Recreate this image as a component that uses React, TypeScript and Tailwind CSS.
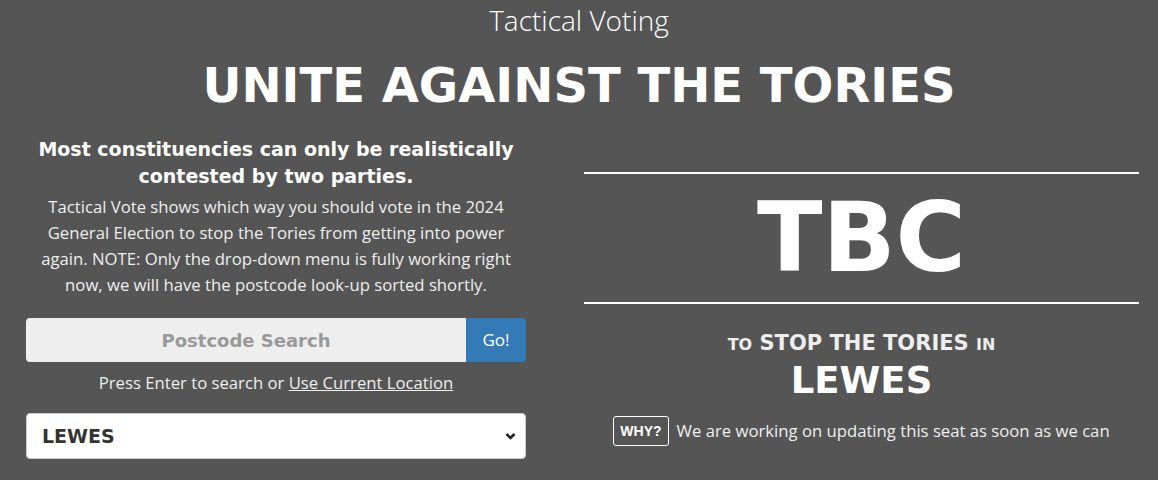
import React from "react";

const HEAD = { fontFamily: "'DejaVu Sans', 'Liberation Sans', sans-serif" };
const BODY = { fontFamily: "'Open Sans', Lato, sans-serif" };

function PostcodeSearch() {
  return (
    <div className="flex h-[44px] w-[500px]">
      <input
        type="text"
        placeholder="Postcode Search"
        className="flex-1 rounded-l-[4px] bg-[#eeeeee] text-center text-[18px] font-bold text-[#333] placeholder:text-[#999] outline-none"
        style={HEAD}
      />
      <button
        className="w-[60px] rounded-r-[4px] bg-[#337ab7] text-[17px] text-white"
        style={BODY}
      >
        Go!
      </button>
    </div>
  );
}

function SeatSelect() {
  return (
    <div className="relative w-[500px]">
      <div
        className="flex h-[46px] items-center rounded-[4px] border border-[#ccc] bg-white pl-[15px] text-[19px] font-bold text-[#333]"
        style={HEAD}
      >
        LEWES
      </div>
      {/* chevron */}
      <svg
        className="absolute right-[10px] top-[19px]"
        width="11"
        height="9"
        viewBox="0 0 11 9"
      >
        <path d="M1.5 2 L5.5 6 L9.5 2" stroke="#222" strokeWidth="2.6" fill="none" />
      </svg>
    </div>
  );
}

export default function App() {
  return (
    <div className="min-h-[480px] w-full bg-[#555555] text-white" style={BODY}>
      <div className="text-center text-[28px] leading-[40px] font-light">
        Tactical Voting
      </div>
      <h1
        className="mt-[16px] text-center text-[48px] leading-[58px] font-bold"
        style={HEAD}
      >
        UNITE AGAINST THE TORIES
      </h1>

      <div className="mt-[22px] flex">
        {/* left column */}
        <div className="ml-[26px] flex w-[500px] flex-col items-center">
          <h2
            className="text-center text-[19px] leading-[27px] font-bold"
            style={HEAD}
          >
            Most constituencies can only be realistically
            <br />
            contested by two parties.
          </h2>
          <p className="mt-[4px] text-center text-[16.7px] leading-[26px] text-[#eee]">
            Tactical Vote shows which way you should vote in the 2024
            <br />
            General Election to stop the Tories from getting into power
            <br />
            again. NOTE: Only the drop-down menu is fully working right
            <br />
            now, we will have the postcode look-up sorted shortly.
          </p>
          <div className="mt-[20px]">
            <PostcodeSearch />
          </div>
          <div className="mt-[9px] text-[16.7px] leading-[24px] text-[#eee]">
            Press Enter to search or{" "}
            <span className="underline">Use Current Location</span>
          </div>
          <div className="mt-[18px]">
            <SeatSelect />
          </div>
        </div>

        {/* right column */}
        <div className="ml-[58px] flex w-[555px] flex-col items-center pt-[36px]">
          <div className="h-[2px] w-full bg-white" />
          <div
            className="py-[12px] text-[96px] leading-[104px] font-bold"
            style={HEAD}
          >
            TBC
          </div>
          <div className="h-[2px] w-full bg-white" />
          <div
            className="mt-[26px] text-[21px] leading-[26px] font-bold text-[#eee]"
            style={HEAD}
          >
            <span className="text-[16px]">TO</span> STOP THE TORIES{" "}
            <span className="text-[16px]">IN</span>
          </div>
          <div
            className="text-[37px] leading-[46px] font-bold"
            style={HEAD}
          >
            LEWES
          </div>
          <div className="mt-[12px] flex items-center gap-[8px]">
            <span
              className="rounded-[3px] border border-white px-[6px] py-[5px] text-[14px] leading-[18px] font-bold"
              style={{ fontFamily: "'Liberation Sans', sans-serif" }}
            >
              WHY?
            </span>
            <span className="text-[16.7px] text-[#eee]">
              We are working on updating this seat as soon as we can
            </span>
          </div>
        </div>
      </div>
    </div>
  );
}
